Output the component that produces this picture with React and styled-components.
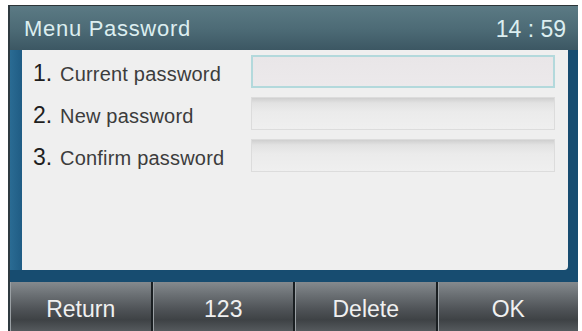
import React from "react";
import styled, { createGlobalStyle } from "styled-components";

const GlobalStyle = createGlobalStyle`
  html, body {
    margin: 0;
    padding: 0;
    background: #ffffff;
    overflow: hidden;
  }
  body {
    font-family: "Liberation Sans", Arial, sans-serif;
  }
`;

const fields = [
  { num: "1.", label: "Current password", active: true },
  { num: "2.", label: "New password" },
  { num: "3.", label: "Confirm password" },
];

const keys = ["Return", "123", "Delete", "OK"];

export default function App() {
  return (
    <>
      <GlobalStyle />
      <Device>
        <TitleBar>
          <Title>Menu Password</Title>
          <Clock>14 : 59</Clock>
        </TitleBar>
        <Body>
          <Panel>
            {fields.map((f) => (
              <Row key={f.num}>
                <Label>
                  <Num>{f.num}</Num>
                  <Text>{f.label}</Text>
                </Label>
                <Input $active={f.active} />
              </Row>
            ))}
          </Panel>
        </Body>
        <SoftKeys>
          {keys.map((k) => (
            <SoftKey key={k}>{k}</SoftKey>
          ))}
        </SoftKeys>
      </Device>
    </>
  );
}

const Device = styled.div`
  margin: 5px 0 0 8px;
  width: 570px;
  height: 340px;
  background: #174c70;
  border-top: 1px solid #2c3438;
  border-left: 2px solid #2f3a40;
  box-sizing: border-box;
  display: flex;
  flex-direction: column;
`;

const TitleBar = styled.div`
  height: 44px;
  flex-shrink: 0;
  display: flex;
  align-items: center;
  justify-content: space-between;
  padding: 0 12px 0 14px;
  background: linear-gradient(to bottom, #5b7a84 0%, #4c6a75 55%, #3c5763 100%);
  color: #dceef0;
  box-sizing: border-box;
`;

const Title = styled.div`
  font-size: 22px;
  letter-spacing: 0.7px;
  margin-top: 2px;
`;

const Clock = styled.div`
  font-size: 23px;
  margin-top: 2px;
`;

const Body = styled.div`
  height: 220px;
  flex-shrink: 0;
  display: flex;
  padding: 0 10px 0 12px;
  background: linear-gradient(to right, #2a6b93 0px, #1f5c84 12px, #174c70 13px);
  box-sizing: border-box;
`;

const Panel = styled.div`
  flex: 1;
  background: #efefef;
  border-bottom-right-radius: 4px;
  padding: 5px 13px 0 11px;
  display: flex;
  flex-direction: column;
  gap: 9px;
`;

const Row = styled.div`
  height: 33px;
  display: flex;
  align-items: center;
  justify-content: space-between;
`;

const Label = styled.div`
  display: flex;
  align-items: baseline;
  margin-top: 4px;
`;

const Num = styled.span`
  font-size: 23px;
  color: #1e1e1e;
  width: 27px;
`;

const Text = styled.span`
  font-size: 20px;
  letter-spacing: 0.2px;
  color: #3c3c3c;
`;

const Input = styled.div`
  width: 304px;
  height: 33px;
  box-sizing: border-box;
  border: ${(p) => (p.$active ? "2px solid #b3d9dc" : "1px solid #dcdcdc")};
  background: ${(p) =>
    p.$active
      ? "linear-gradient(to bottom, #e9e6e8, #ece9eb)"
      : "linear-gradient(to bottom, #cfcfcf 0px, #e2e2e2 5px, #ebebeb 14px, #efefef 100%)"};
`;

const SoftKeys = styled.div`
  margin-top: 12px;
  display: grid;
  grid-template-columns: repeat(4, 1fr);
  gap: 2px;
  background: #1a1f22;
  flex: 1;
`;

const SoftKey = styled.div`
  display: flex;
  align-items: center;
  justify-content: center;
  padding-bottom: 8px;
  color: #f0f0f0;
  font-size: 23px;
  border-left: 1px solid #9aa0a4;
  background: linear-gradient(
    to bottom,
    #858a8e 0%,
    #6b7074 20%,
    #4d5155 45%,
    #3e4245 60%,
    #5e6367 85%,
    #6e7377 100%
  );
`;
